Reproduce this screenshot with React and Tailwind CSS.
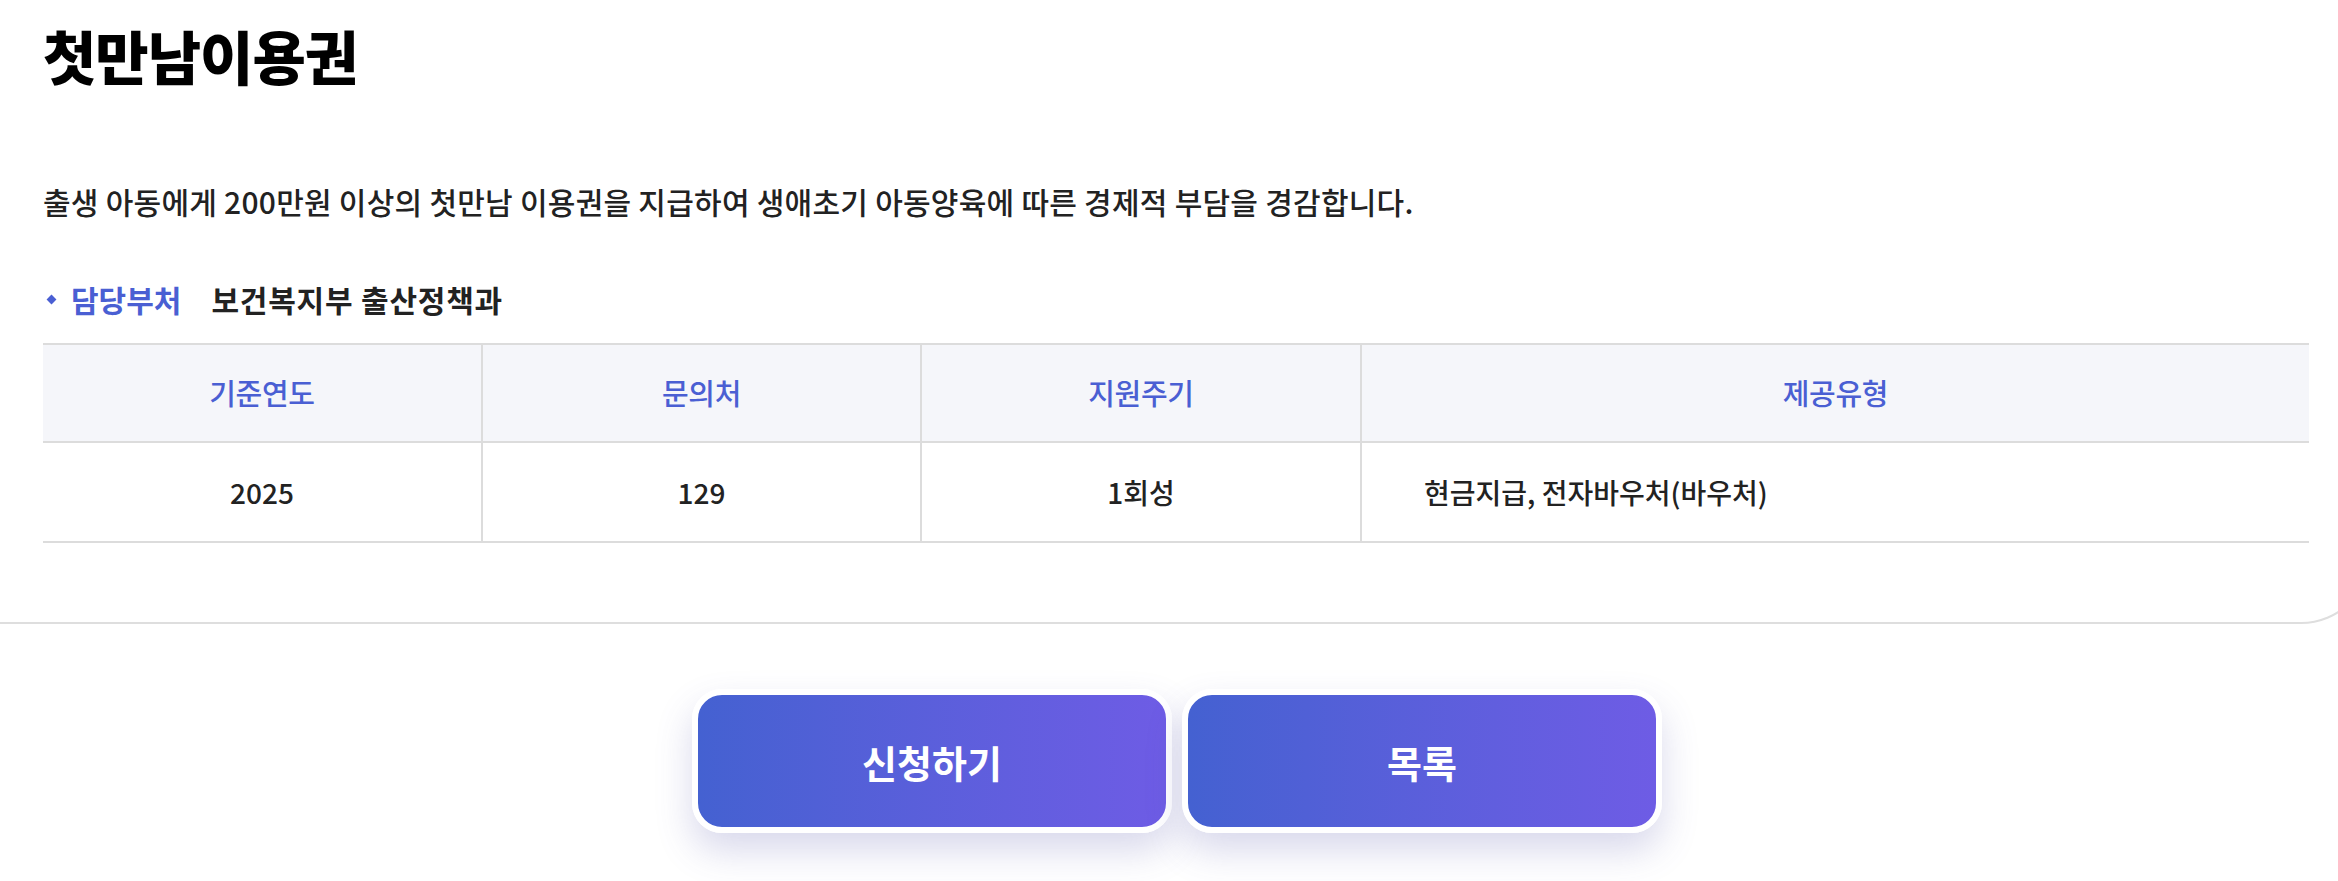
import React from "react";

const info = [
  { label: "기준연도", value: "2025" },
  { label: "문의처", value: "129" },
  { label: "지원주기", value: "1회성" },
  { label: "제공유형", value: "현금지급, 전자바우처(바우처)", wide: true },
];

function App() {
  return (
    <div className="min-h-[881px] w-full overflow-hidden bg-white font-['Noto_Sans_CJK_KR','Noto_Sans',sans-serif] text-[#222]">
      <div className="-ml-[17px] w-[2388px]">
        <section className="rounded-br-[70px] border-r-2 border-b-2 border-[#dedede] px-[60px] pt-[20px] pb-[79px]">
          <h1 className="text-[58px] leading-[70px] font-black tracking-[-1px] text-black">첫만남이용권</h1>

          <p className="mt-[91px] text-[30px] leading-[40px] font-medium tracking-[0.25px]">
            출생 아동에게 200만원 이상의 첫만남 이용권을 지급하여 생애초기 아동양육에 따른 경제적 부담을 경감합니다.
          </p>

          <div className="mt-[58px] flex items-center text-[30px] leading-[40px]">
            <span className="ml-[5px] h-[7px] w-[7px] rotate-45 bg-[#4a5fd3]" />
            <span className="ml-[16px] font-bold text-[#4a5fd3]">담당부처</span>
            <span className="ml-[30px] font-bold tracking-[0.8px] text-[#222]">보건복지부 출산정책과</span>
          </div>

          <table className="mt-[24px] w-full table-fixed border-collapse">
            <colgroup>
              <col className="w-[439px]" />
              <col className="w-[439px]" />
              <col className="w-[440px]" />
              <col />
            </colgroup>
            <thead>
              <tr className="bg-[#f5f6fa]">
                {info.map((c, i) => (
                  <th
                    key={c.label}
                    className={`h-[98px] border-t-2 border-b-2 border-[#dcdcdc] text-center text-[29px] font-medium tracking-[-0.3px] text-[#4a5fd3] ${i > 0 ? "border-l-2" : ""}`}
                  >
                    {c.label}
                  </th>
                ))}
              </tr>
            </thead>
            <tbody>
              <tr>
                {info.map((c, i) => (
                  <td
                    key={c.label}
                    className={`h-[100px] border-b-2 border-[#dcdcdc] text-[28px] font-medium text-[#222] ${i > 0 ? "border-l-2" : ""} ${c.wide ? "pl-[62px] text-left" : "text-center"}`}
                  >
                    {c.value}
                  </td>
                ))}
              </tr>
            </tbody>
          </table>
        </section>

        <div className="mt-[65px] flex justify-center gap-[10px] pb-[48px]">
          <button
            type="button"
            className="flex h-[144px] w-[480px] items-center justify-center rounded-[30px] border-[6px] border-white bg-linear-to-r from-[#4461d1] to-[#6e5ce5] text-[38px] font-bold text-white shadow-[0_18px_36px_rgba(80,80,170,0.22)]"
          >
            신청하기
          </button>
          <button
            type="button"
            className="flex h-[144px] w-[480px] items-center justify-center rounded-[30px] border-[6px] border-white bg-linear-to-r from-[#4461d1] to-[#6e5ce5] text-[38px] font-bold text-white shadow-[0_18px_36px_rgba(80,80,170,0.22)]"
          >
            목록
          </button>
        </div>
      </div>
    </div>
  );
}

export default App;
